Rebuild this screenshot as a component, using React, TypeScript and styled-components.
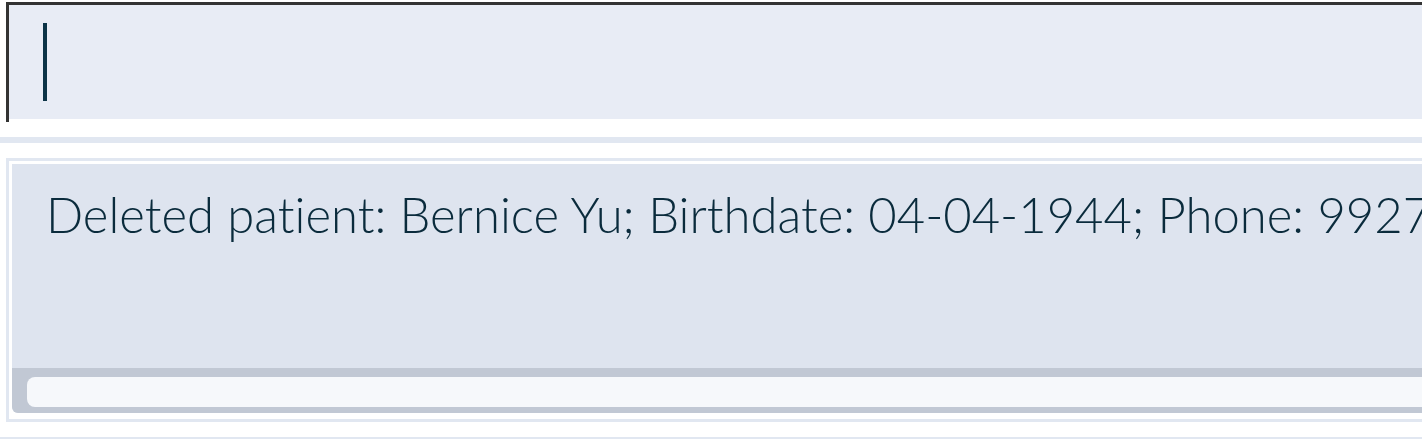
import React from "react";
import styled, { createGlobalStyle } from "styled-components";

const GlobalStyle = createGlobalStyle`
  html, body {
    margin: 0;
    padding: 0;
    background: #ffffff;
    overflow: hidden;
  }
  body {
    font-family: Lato, "Open Sans", "Noto Sans", sans-serif;
  }
`;

const Page = styled.div`
  width: 1422px;
  height: 439px;
  overflow: hidden;
  display: flex;
  flex-direction: column;
  padding-top: 2px;
  box-sizing: border-box;
  & > * {
    flex-shrink: 0;
  }
`;

const CommandBar = styled.div`
  margin-left: 6px;
  height: 120px;
  box-sizing: border-box;
  border-top: 3px solid #333333;
  border-left: 3px solid #333333;
  padding-bottom: 3px;
  display: flex;
`;

const CommandInput = styled.div`
  flex: 1;
  background: #e8ecf5;
  padding: 18px 0 0 34px;
  box-sizing: border-box;
`;

const Caret = styled.span`
  display: block;
  width: 4px;
  height: 78px;
  background: #0c3447;
`;

const Divider = styled.div<{ $top: number }>`
  margin-top: ${(p) => p.$top}px;
  height: 6px;
  background: #e1e7f1;
`;

const ResultFrame = styled.div`
  margin: 15px 0 0 6px;
  border: 3px solid #e1e7f1;
  border-right: none;
  padding: 3px 0 6px 3px;
  height: 264px;
  box-sizing: border-box;
  display: flex;
`;

const ResultPanel = styled.div`
  flex: 1;
  background: #dee4ef;
  display: flex;
  flex-direction: column;
  border-bottom-left-radius: 6px;
  overflow: hidden;
`;

const ResultText = styled.div`
  flex: 1;
  padding: 18px 0 0 34px;
  font-family: Lato, "Open Sans", sans-serif;
  font-weight: 300;
  font-size: 49px;
  line-height: 64px;
  font-variant-ligatures: none;
  color: #0a2b3c;
  white-space: nowrap;
  overflow: hidden;
`;

const ScrollTrack = styled.div`
  height: 45px;
  flex-shrink: 0;
  background: #c1c8d4;
  padding: 9px 0 6px 15px;
  box-sizing: border-box;
  display: flex;
`;

const ScrollThumb = styled.div`
  flex: 1;
  background: #f6f8fb;
  border-top-left-radius: 8px;
  border-bottom-left-radius: 8px;
`;

export default function App() {
  return (
    <>
      <GlobalStyle />
      <Page>
        <CommandBar>
          <CommandInput>
            <Caret />
          </CommandInput>
        </CommandBar>
        <Divider $top={15} />
        <ResultFrame>
          <ResultPanel>
            <ResultText>
              Deleted patient: Bernice Yu; Birthdate: 04-04-1944; Phone: 99272758; Email: berniceyu@example.com
            </ResultText>
            <ScrollTrack>
              <ScrollThumb />
            </ScrollTrack>
          </ResultPanel>
        </ResultFrame>
        <Divider $top={15} />
      </Page>
    </>
  );
}
